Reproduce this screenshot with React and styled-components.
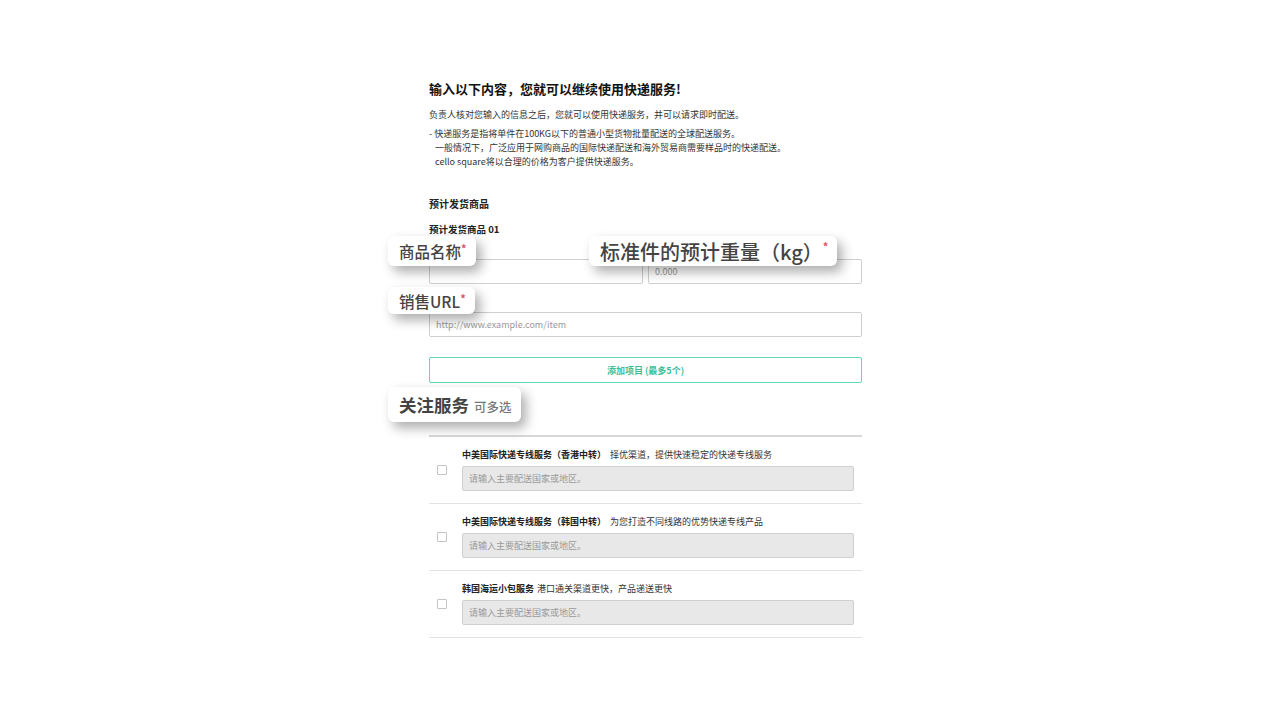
import React from 'react';
import styled, { createGlobalStyle } from 'styled-components';

const GlobalStyle = createGlobalStyle`
  html, body {
    margin: 0;
    padding: 0;
    background: #ffffff;
  }
  body {
    font-family: "Noto Sans CJK SC", "Noto Sans", sans-serif;
    color: #333;
  }
  * {
    box-sizing: border-box;
  }
`;

const Page = styled.div`
  width: 1280px;
  height: 720px;
  overflow: hidden;
  background: #fff;
`;

const Column = styled.div`
  position: relative;
  width: 433px;
  margin-left: 429px;
  padding-top: 79px;
`;

const Title = styled.h1`
  margin: 0;
  font-size: 13px;
  line-height: 20px;
  font-weight: 700;
  color: #111;
`;

const Lead = styled.p`
  margin: 9px 0 0;
  font-size: 9px;
  line-height: 14px;
  color: #333;
`;

const Notes = styled.p`
  margin: 5px 0 0;
  font-size: 9px;
  line-height: 14px;
  color: #333;
  white-space: pre;
`;

const SectionTitle = styled.h2`
  margin: 28px 0 0;
  font-size: 10px;
  line-height: 14px;
  font-weight: 700;
  color: #222;
`;

const ItemTitle = styled.h3`
  margin: 11px 0 0;
  font-size: 9.5px;
  line-height: 14px;
  font-weight: 700;
  color: #222;
`;

const FieldRow = styled.div`
  display: grid;
  grid-template-columns: ${p => p.$cols || '1fr'};
  gap: 5px;
  margin-top: ${p => p.$top || 0}px;
`;

const Field = styled.div`
  display: flex;
  flex-direction: column;
  gap: 4px;
`;

const Label = styled.label`
  font-size: 9.5px;
  line-height: 13px;
  color: #333;
`;

const Input = styled.input`
  width: 100%;
  height: 25px;
  padding: 0 6px;
  border: 1px solid #cfcfcf;
  border-radius: 2px;
  background: ${p => (p.disabled ? '#e8e8e8' : '#fff')};
  font-family: inherit;
  font-size: 9px;
  color: #333;
  outline: none;
  &::placeholder {
    color: #999;
  }
`;

const AddButton = styled.button`
  display: block;
  width: 100%;
  height: 26px;
  margin-top: 20px;
  border: 1.5px solid #62d6b6;
  border-radius: 2px;
  background: #fff;
  font-family: inherit;
  font-size: 9px;
  font-weight: 700;
  color: #3bbf97;
`;

const ServiceHeading = styled.div`
  margin-top: 14px;
  height: 38px;
  font-size: 13px;
  line-height: 20px;
  font-weight: 700;
  color: #222;
`;

const ServiceList = styled.div`
  border-top: 2px solid #d8d8d8;
`;

const ServiceRow = styled.div`
  display: flex;
  align-items: center;
  gap: 15px;
  padding: 11px 8px 12px;
  border-bottom: 1px solid #e3e3e3;
`;

const Check = styled.span`
  flex: none;
  width: 10px;
  height: 10px;
  border: 1px solid #c4c4c4;
  border-radius: 1px;
  background: #fff;
`;

const ServiceBody = styled.div`
  flex: 1;
  display: flex;
  flex-direction: column;
  gap: 4px;
`;

const ServiceName = styled.div`
  font-size: 9px;
  line-height: 14px;
  color: #333;
  b {
    font-weight: 700;
    color: #222;
    margin-right: ${p => p.$gap}px;
  }
`;

const Callout = styled.div`
  position: absolute;
  top: ${p => p.$top}px;
  left: ${p => p.$left}px;
  height: ${p => p.$h}px;
  display: flex;
  align-items: center;
  gap: 5px;
  padding: 0 9px 0 11px;
  background: #fff;
  border-radius: 6px;
  box-shadow: 5px 6px 12px rgba(0, 0, 0, 0.32);
  font-size: ${p => p.$size}px;
  font-weight: ${p => p.$weight || 500};
  color: #444;
  white-space: nowrap;
`;

const Star = styled.sup`
  color: #e05263;
  font-size: 11px;
  font-weight: 700;
  align-self: flex-start;
  margin-top: ${p => p.$mt || 7}px;
  margin-left: -5px;
  line-height: 1;
`;

const Hint = styled.span`
  font-size: 12.5px;
  font-weight: 500;
  color: #777;
  margin-top: 3px;
`;

const services = [
  { name: '中美国际快递专线服务（香港中转）', desc: '择优渠道，提供快速稳定的快递专线服务', gap: 4 },
  { name: '中美国际快递专线服务（韩国中转）', desc: '为您打造不同线路的优势快递专线产品', gap: 4 },
  { name: '韩国海运小包服务', desc: '港口通关渠道更快，产品递送更快', gap: 3 },
];

export default function App() {
  return (
    <Page>
      <GlobalStyle />
      <Column>
        <Title>输入以下内容，您就可以继续使用快递服务!</Title>
        <Lead>负责人核对您输入的信息之后，您就可以使用快递服务，并可以请求即时配送。</Lead>
        <Notes>
          {'- 快递服务是指将单件在100KG以下的普通小型货物批量配送的全球配送服务。\n   一般情况下，广泛应用于网购商品的国际快递配送和海外贸易商需要样品时的快递配送。\n   cello square将以合理的价格为客户提供快递服务。'}
        </Notes>

        <SectionTitle>预计发货商品</SectionTitle>
        <ItemTitle>预计发货商品 01</ItemTitle>

        <FieldRow $cols="1fr 1fr" $top={6}>
          <Field>
            <Label>商品名称</Label>
            <Input />
          </Field>
          <Field>
            <Label>标准件的预计重量（kg）</Label>
            <Input placeholder="0.000" />
          </Field>
        </FieldRow>

        <FieldRow $top={11}>
          <Field>
            <Label>销售URL</Label>
            <Input placeholder="http://www.example.com/item" />
          </Field>
        </FieldRow>

        <AddButton>添加项目 (最多5个)</AddButton>

        <ServiceHeading>关注服务</ServiceHeading>

        <ServiceList>
          {services.map(s => (
            <ServiceRow key={s.name}>
              <Check />
              <ServiceBody>
                <ServiceName $gap={s.gap}>
                  <b>{s.name}</b>
                  {s.desc}
                </ServiceName>
                <Input disabled placeholder="请输入主要配送国家或地区。" />
              </ServiceBody>
            </ServiceRow>
          ))}
        </ServiceList>

        <Callout $top={236} $left={-41} $h={30} $size={15.5}>
          商品名称<Star>*</Star>
        </Callout>
        <Callout $top={236} $left={160} $h={30} $size={20}>
          标准件的预计重量（kg）<Star $mt={5}>*</Star>
        </Callout>
        <Callout $top={287} $left={-41} $h={27} $size={15.5}>
          销售URL<Star $mt={6}>*</Star>
        </Callout>
        <Callout $top={387} $left={-41} $h={35} $size={17.5} $weight={700}>
          关注服务<Hint>可多选</Hint>
        </Callout>
      </Column>
    </Page>
  );
}
